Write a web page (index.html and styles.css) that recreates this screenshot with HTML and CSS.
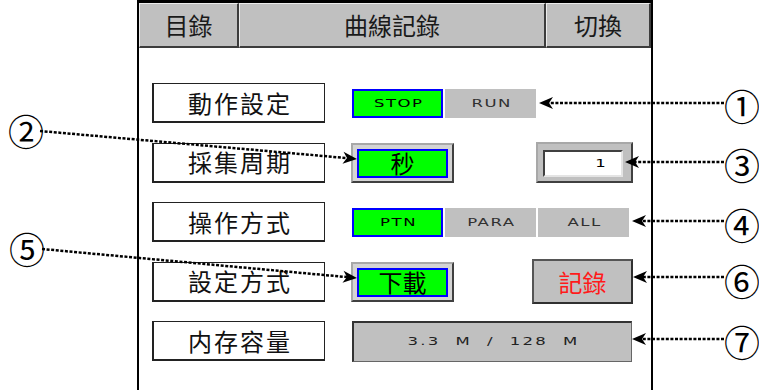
FILE: index.html
```html
<!DOCTYPE html>
<html lang="zh-Hant">
<head>
<meta charset="utf-8">
<title>曲線記錄</title>
<link rel="stylesheet" href="styles.css">
</head>
<body>
<div class="page">
  <div class="frame">
    <div class="header">
      <div class="hcell c1">目錄</div>
      <div class="hcell c2">曲線記錄</div>
      <div class="hcell c3">切換</div>
    </div>
    <div class="rows">
      <div class="row">
        <div class="label">動作設定</div>
        <div class="ctrl">
          <div class="seg">
            <div class="opt on"><span class="wide">STOP</span></div>
            <div class="opt"><span class="wide">RUN</span></div>
          </div>
        </div>
      </div>
      <div class="row">
        <div class="label">採集周期</div>
        <div class="ctrl">
          <div class="btn"><div class="face">秒</div></div>
          <div class="numbox"><div class="field"><span class="wide">1</span></div></div>
        </div>
      </div>
      <div class="row">
        <div class="label">操作方式</div>
        <div class="ctrl">
          <div class="seg">
            <div class="opt on"><span class="wide">PTN</span></div>
            <div class="opt"><span class="wide">PARA</span></div>
            <div class="opt"><span class="wide">ALL</span></div>
          </div>
        </div>
      </div>
      <div class="row">
        <div class="label">設定方式</div>
        <div class="ctrl">
          <div class="btn"><div class="face">下載</div></div>
          <div class="rec">記錄</div>
        </div>
      </div>
      <div class="row">
        <div class="label">内存容量</div>
        <div class="ctrl">
          <div class="mem"><span class="wide memtext">3.3 M / 128 M</span></div>
        </div>
      </div>
    </div>
  </div>

  <svg class="notes" width="759" height="390" viewBox="0 0 759 390">
    <defs>
      <marker id="ah" markerUnits="userSpaceOnUse" markerWidth="16" markerHeight="14" refX="5" refY="7" orient="auto">
        <path d="M15,7 L1,1 L5,7 L1,13 Z" fill="#000"/>
      </marker>
    </defs>
    <g class="dots">
      <line x1="724" y1="103" x2="549" y2="103"/>
      <line x1="40" y1="131" x2="347" y2="158.1"/>
      <line x1="724" y1="162" x2="635" y2="162"/>
      <line x1="724" y1="221" x2="642" y2="221"/>
      <line x1="42" y1="249" x2="347" y2="277.1"/>
      <line x1="724" y1="277" x2="643" y2="277"/>
      <line x1="724" y1="339" x2="642" y2="339"/>
    </g>
    <g class="nums">
      <text x="742" y="105">①</text>
      <text x="26" y="130">②</text>
      <text x="742" y="164">③</text>
      <text x="742" y="224">④</text>
      <text x="27" y="248">⑤</text>
      <text x="742" y="280">⑥</text>
      <text x="742" y="341">⑦</text>
    </g>
  </svg>
</div>
</body>
</html>
```

FILE: styles.css
```css
* {
  box-sizing: border-box;
}

body {
  margin: 0;
  background: #ffffff;
  font-family: "Noto Sans CJK TC", "Noto Sans CJK SC", sans-serif;
}

.page {
  position: relative;
  width: 759px;
  height: 390px;
  overflow: hidden;
}

.frame {
  margin-left: 137px;
  width: 516px;
  height: 400px;
  border: 2px solid #000;
  border-top-width: 3px;
  border-bottom: none;
}

.header {
  display: flex;
  height: 45px;
}

.hcell {
  background: #c0c0c0;
  border-style: solid;
  border-width: 1px 2px 2px 1px;
  border-color: #ececec #3c3c3c #3c3c3c #ececec;
  display: flex;
  align-items: center;
  justify-content: center;
  font-size: 24px;
  line-height: 1;
  color: #1a1a1a;
}

.c1 { width: 100px; }
.c2 { width: 307px; }
.c3 { flex: 1; }

.rows {
  display: flex;
  flex-direction: column;
  gap: 19.5px;
  padding: 35px 0 0 13px;
}

.row {
  display: flex;
  align-items: center;
  gap: 27px;
  height: 40px;
}

.label {
  width: 173px;
  height: 40px;
  border: 1px solid #222;
  border-left-width: 2px;
  border-bottom-width: 2px;
  display: flex;
  align-items: center;
  justify-content: center;
  padding-left: 2px;
  font-size: 24px;
  letter-spacing: 2px;
  line-height: 1;
  color: #111;
}

.ctrl {
  width: 281px;
  display: flex;
  align-items: center;
  justify-content: space-between;
}

.seg {
  display: flex;
  gap: 2px;
}

.opt {
  width: 91px;
  height: 29px;
  background: #c0c0c0;
  display: flex;
  align-items: center;
  justify-content: center;
  color: #303030;
  font-family: "DejaVu Sans", sans-serif;
  font-size: 11px;
  line-height: 1;
}

.opt.on {
  background: #00ff00;
  border: 2px solid #0000ff;
  color: #000;
}

.wide {
  display: inline-block;
  transform: scaleX(1.5);
  letter-spacing: 1px;
  padding-left: 1px;
}

.btn {
  margin-left: -1px;
  border: 2px solid;
  border-color: #a8a8a8 #404040 #404040 #a8a8a8;
  padding: 4px 4px 3px 4px;
  background: #d4d4d4;
}

.face {
  width: 91px;
  height: 29px;
  border: 2px solid #0000ff;
  background: #00ff00;
  display: flex;
  align-items: center;
  justify-content: center;
  font-size: 24px;
  line-height: 1;
  color: #000;
}

.numbox {
  border: 2px solid;
  border-color: #a8a8a8 #404040 #404040 #a8a8a8;
  padding: 6px 8px 4px 5px;
  background: #c0c0c0;
}

.field {
  width: 80px;
  height: 27px;
  border: 2px solid;
  border-color: #404040 #e4e4e4 #e4e4e4 #404040;
  background: #fff;
  display: flex;
  align-items: center;
  justify-content: flex-end;
  padding-right: 16px;
  font-family: "DejaVu Sans", sans-serif;
  font-size: 11px;
  line-height: 1;
  color: #000;
}

.rec {
  width: 101px;
  height: 45px;
  border: 2px solid #333;
  border-color: #555 #303030 #303030 #555;
  background: #c0c0c0;
  display: flex;
  align-items: center;
  justify-content: center;
  font-size: 24px;
  line-height: 1;
  color: #ff1a1a;
}

.mem {
  width: 280px;
  height: 41px;
  border-style: solid;
  border-width: 2px 1px 1px 2px;
  border-color: #333 #666 #666 #333;
  background: #c0c0c0;
  display: flex;
  align-items: center;
  justify-content: center;
  font-family: "DejaVu Sans", sans-serif;
  font-size: 11px;
  line-height: 1;
  color: #222;
}

.memtext {
  letter-spacing: 1.5px;
  word-spacing: 5px;
  white-space: pre;
}

.notes {
  position: absolute;
  left: 0;
  top: 0;
  pointer-events: none;
}

.dots line {
  stroke: #000;
  stroke-width: 2.5;
  stroke-dasharray: 3 1.6;
  marker-end: url(#ah);
}

.nums text {
  font-family: "Noto Sans CJK TC", "Noto Sans CJK SC", sans-serif;
  font-size: 36px;
  text-anchor: middle;
  dominant-baseline: central;
  fill: #000;
}
```
